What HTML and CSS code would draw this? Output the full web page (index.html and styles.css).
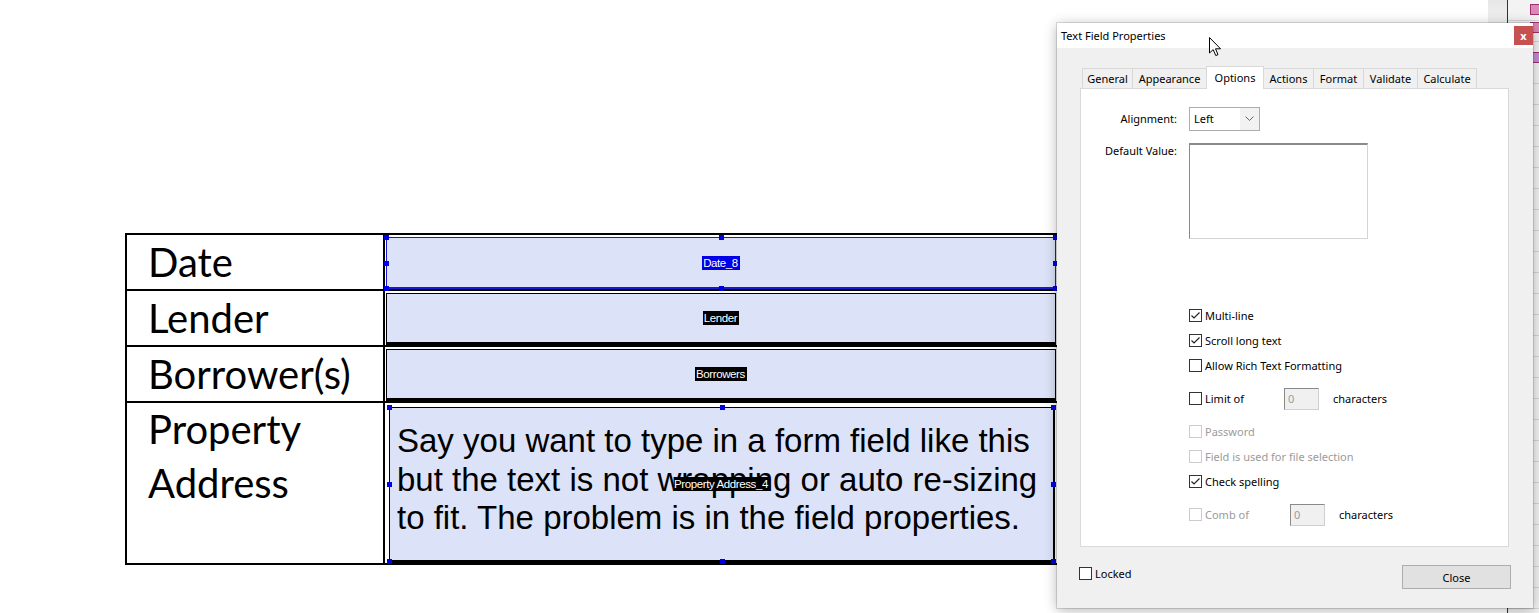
FILE: index.html
```html
<!DOCTYPE html>
<html lang="en">
<head>
    <meta charset="UTF-8">
    <title>Text Field Properties</title>
    <link rel="stylesheet" href="styles.css">
</head>
<body>

    <!-- Form in the document -->
    <div class="form-table">
        <div class="label">Date</div>
        <div class="cell">
            <div class="field selected">
                <span class="tag tag-sel">Date_8</span>
                <i class="hd tl"></i><i class="hd tm"></i><i class="hd tr"></i>
                <i class="hd ml"></i><i class="hd mr"></i>
                <i class="hd bl"></i><i class="hd bm"></i><i class="hd br"></i>
            </div>
        </div>

        <div class="label">Lender</div>
        <div class="cell">
            <div class="field"><span class="tag">Lender</span></div>
        </div>

        <div class="label">Borrower(s)</div>
        <div class="cell">
            <div class="field"><span class="tag">Borrowers</span></div>
        </div>

        <div class="label label-tall">Property<br>Address</div>
        <div class="cell cell-tall">
            <div class="field field-text">
                <div class="field-value">Say you want to type in a form field like this<br>but the text is not wrapping or auto re-sizing<br>to fit. The problem is in the field properties.</div>
                <span class="tag tag-over">Property Address_4</span>
                <i class="hd tl"></i><i class="hd tm"></i><i class="hd tr"></i>
                <i class="hd ml"></i><i class="hd mr"></i>
                <i class="hd bl"></i><i class="hd bm"></i><i class="hd br"></i>
            </div>
        </div>
    </div>

    <!-- Side panel behind the dialog -->
    <div class="gutter"></div>
    <div class="side">
        <span class="side-icon"></span>
        <span class="side-icon second"></span>
        <span class="side-icon third"></span>
    </div>

    <!-- Dialog -->
    <div class="dialog">
        <div class="titlebar">
            <span class="title">Text Field Properties</span>
            <span class="xbtn">x</span>
        </div>

        <div class="dlg-body">
            <div class="tabs">
                <div class="tab" style="width:51px">General</div>
                <div class="tab" style="width:75px">Appearance</div>
                <div class="tab active" style="width:58px">Options</div>
                <div class="tab" style="width:51px">Actions</div>
                <div class="tab" style="width:51px">Format</div>
                <div class="tab" style="width:55px">Validate</div>
                <div class="tab" style="width:60px">Calculate</div>
            </div>

            <div class="panel">
                <div class="prop-grid">
                    <div class="prop-label">Alignment:</div>
                    <div class="select">
                        <span class="select-val">Left</span>
                        <span class="select-arrow">
                            <svg width="9" height="6" viewBox="0 0 9 6"><path d="M0.5 0.5 L4.5 4.5 L8.5 0.5" fill="none" stroke="#666" stroke-width="1"/></svg>
                        </span>
                    </div>

                    <div class="prop-label short">Default Value:</div>
                    <div class="textarea"></div>
                </div>

                <div class="options">
                    <div class="opt">
                        <span class="cb checked"><svg width="11" height="11" viewBox="0 0 11 11"><path d="M1.5 5.5 L4 8 L9.5 2.5" fill="none" stroke="#222" stroke-width="1.2"/></svg></span>
                        Multi-line
                    </div>
                    <div class="opt">
                        <span class="cb checked"><svg width="11" height="11" viewBox="0 0 11 11"><path d="M1.5 5.5 L4 8 L9.5 2.5" fill="none" stroke="#222" stroke-width="1.2"/></svg></span>
                        Scroll long text
                    </div>
                    <div class="opt">
                        <span class="cb"></span>
                        Allow Rich Text Formatting
                    </div>
                    <div class="opt spaced">
                        <span class="cb"></span>
                        <span class="opt-name limit">Limit of</span>
                        <span class="num">0</span>
                        <span class="chars">characters</span>
                    </div>
                    <div class="opt spaced disabled">
                        <span class="cb"></span>
                        Password
                    </div>
                    <div class="opt disabled">
                        <span class="cb"></span>
                        Field is used for file selection
                    </div>
                    <div class="opt">
                        <span class="cb checked"><svg width="11" height="11" viewBox="0 0 11 11"><path d="M1.5 5.5 L4 8 L9.5 2.5" fill="none" stroke="#222" stroke-width="1.2"/></svg></span>
                        Check spelling
                    </div>
                    <div class="opt spaced disabled">
                        <span class="cb"></span>
                        <span class="opt-name comb">Comb of</span>
                        <span class="num">0</span>
                        <span class="chars">characters</span>
                    </div>
                </div>
            </div>

            <div class="dlg-foot">
                <div class="locked"><span class="cb"></span>Locked</div>
                <div class="btn">Close</div>
            </div>
        </div>
    </div>

    <!-- Mouse pointer -->
    <svg class="cursor" width="13" height="20" viewBox="0 0 13 20">
        <path d="M0.5 0.5 L0.5 16 L4.2 12.6 L6.8 18.6 L9 17.6 L6.5 11.8 L11.5 11.8 Z" fill="#fff" stroke="#000" stroke-width="1" stroke-linejoin="round"/>
    </svg>

</body>
</html>
```

FILE: styles.css
```css
body {
    margin: 0;
    background: #fff;
    font-family: "Liberation Sans", Arial, sans-serif;
    overflow: hidden;
}

/* document form */
.form-table {
    display: grid;
    grid-template-columns: 256px 675px;
    grid-template-rows: 54px 54px 54px 160px;
    gap: 2px;
    width: max-content;
    margin: 233px 0 0 125px;
    background: #000;
    border: 2px solid #000;
}
.label {
    background: #fff;
    padding-left: 21px;
    font-family: Lato, "Open Sans", sans-serif;
    font-size: 40px;
    line-height: 54px;
    color: #000;
}
.label-tall::before {
    content: "";
    display: block;
    margin-top: -1px;
}
.cell {
    background: #fff;
    padding: 2px 4px 0 1px;
    display: flex;
}
.cell-tall {
    padding: 4px 5px 0 4px;
}
.field {
    flex: 1;
    position: relative;
    display: flex;
    align-items: center;
    justify-content: center;
    background: #dce3f8;
    border: 1px solid #000;
    border-bottom-width: 3px;
}
.field.selected {
    border-color: #1818d8;
    border-bottom-width: 2px;
}
.field-text {
    align-items: flex-start;
    justify-content: flex-start;
    border-right-width: 2px;
}
.field-value {
    padding: 14px 0 0 7px;
    font-size: 33px;
    line-height: 38.5px;
    color: #000;
    white-space: nowrap;
}
.tag {
    display: inline-block;
    font-family: "Liberation Sans Narrow", "Liberation Sans", sans-serif;
    font-size: 11.5px;
    letter-spacing: -0.4px;
    line-height: 15px;
    height: 14px;
    padding: 0 2px 0 1px;
    background: #000;
    color: #fff;
}
.tag-sel {
    background: #0000e8;
}
.tag-over {
    position: absolute;
    left: 50%;
    top: 50%;
    transform: translate(-50%, -50%);
}
.hd {
    position: absolute;
    width: 5px;
    height: 5px;
    background: #0000e0;
}
.hd.tl { left: -3px; top: -3px; }
.hd.tm { left: calc(50% - 2px); top: -3px; }
.hd.tr { right: -3px; top: -3px; }
.hd.ml { left: -3px; top: calc(50% - 2px); }
.hd.mr { right: -3px; top: calc(50% - 2px); }
.hd.bl { left: -3px; bottom: -4px; }
.hd.bm { left: calc(50% - 2px); bottom: -4px; }
.hd.br { right: -3px; bottom: -4px; }

/* side panel */
.gutter {
    position: absolute;
    left: 1488px;
    top: 0;
    width: 19px;
    height: 24px;
    background: linear-gradient(#e6e6e6, #f2f2f2);
}
.side {
    position: absolute;
    left: 1507px;
    top: 0;
    width: 32px;
    height: 613px;
    background:
        repeating-linear-gradient(#f3f3f3 0, #f3f3f3 20px, #d6d6d6 20px, #d6d6d6 21px);
    border-left: 1px solid #333;
}
.side-icon {
    position: absolute;
    left: 22px;
    top: 4px;
    width: 10px;
    height: 9px;
    background: #d98ab8;
    border: 1px solid #a0306a;
}
.side-icon.second { top: 22px; }
.side-icon.third { top: 52px; background: #c78ad9; }

/* dialog */
.dialog {
    position: absolute;
    left: 1057px;
    top: 23px;
    width: 476px;
    height: 585px;
    display: flex;
    flex-direction: column;
    background: #f0f0f0;
    box-shadow: 0 0 0 1px rgba(0, 0, 0, 0.12), 0 2px 12px rgba(0, 0, 0, 0.3);
    font-family: "Noto Sans", "Open Sans", sans-serif;
    font-size: 11px;
    color: #000;
}
.titlebar {
    height: 25px;
    display: flex;
    justify-content: space-between;
    align-items: flex-start;
    padding-left: 4px;
    background: #fff;
}
.title {
    line-height: 25px;
    font-size: 11px;
}
.xbtn {
    width: 19px;
    height: 19px;
    margin-top: 3px;
    display: flex;
    align-items: center;
    justify-content: center;
    background: #c75050;
    color: #fff;
    font-weight: bold;
    font-size: 11px;
    line-height: 1;
}
.dlg-body {
    padding: 18px 24px 0 23px;
    display: flex;
    flex-direction: column;
}
.tabs {
    display: flex;
    align-items: flex-end;
    height: 22px;
    padding-left: 2px;
    position: relative;
    z-index: 1;
}
.tab {
    box-sizing: border-box;
    height: 20px;
    margin-right: -1px;
    display: flex;
    align-items: center;
    justify-content: center;
    background: #f0f0f0;
    border: 1px solid #d9d9d9;
    border-bottom: none;
}
.tab.active {
    height: 23px;
    margin-bottom: -1px;
    background: #fff;
    position: relative;
    z-index: 2;
    padding-bottom: 2px;
}
.panel {
    box-sizing: border-box;
    height: 459px;
    padding-top: 18px;
    background: #fff;
    border: 1px solid #d9d9d9;
}
.prop-grid {
    display: grid;
    grid-template-columns: 96px auto;
    column-gap: 12px;
    row-gap: 12px;
    align-items: start;
}
.prop-label {
    text-align: right;
    line-height: 24px;
}
.prop-label.short {
    line-height: 16px;
}
.select {
    box-sizing: border-box;
    width: 71px;
    height: 24px;
    display: flex;
    background: #fff;
    border: 1px solid #adadad;
}
.select-val {
    flex: 1;
    padding-left: 4px;
    line-height: 22px;
}
.select-arrow {
    width: 19px;
    display: flex;
    align-items: center;
    justify-content: center;
    background: #f2f2f2;
}
.textarea {
    box-sizing: border-box;
    width: 179px;
    height: 96px;
    background: #fff;
    border: 1px solid #d4d4d4;
    border-top: 2px solid #8a8a8a;
    border-left-color: #8a8a8a;
}
.options {
    margin: 64px 0 0 108px;
}
.opt {
    height: 25px;
    display: flex;
    align-items: center;
}
.opt.spaced {
    margin-top: 8px;
}
.opt.disabled {
    color: #9b9b9b;
}
.cb {
    box-sizing: border-box;
    flex: none;
    width: 13px;
    height: 13px;
    margin-right: 3px;
    display: flex;
    align-items: center;
    justify-content: center;
    background: #fff;
    border: 1px solid #333;
}
.opt.disabled .cb {
    border-color: #cccccc;
}
.opt-name.limit { width: 79px; }
.opt-name.comb { width: 85px; }
.num {
    box-sizing: border-box;
    width: 35px;
    height: 22px;
    padding-left: 3px;
    line-height: 20px;
    color: #9b9b9b;
    background: #f0f0f0;
    border: 1px solid #cfcfcf;
    border-top-color: #8a8a8a;
    border-left-color: #8a8a8a;
}
.chars {
    margin-left: 14px;
    color: #000;
}
.dlg-foot {
    display: flex;
    justify-content: space-between;
    align-items: flex-start;
    padding: 18px 0 0 0;
    margin-right: -2px;
    margin-left: -1px;
}
.locked {
    display: flex;
    align-items: center;
    height: 14px;
    margin-top: 1px;
}
.btn {
    box-sizing: border-box;
    width: 109px;
    height: 24px;
    display: flex;
    align-items: center;
    justify-content: center;
    background: #e1e1e1;
    border: 1px solid #adadad;
}

.cursor {
    position: absolute;
    left: 1209px;
    top: 37px;
}
```
